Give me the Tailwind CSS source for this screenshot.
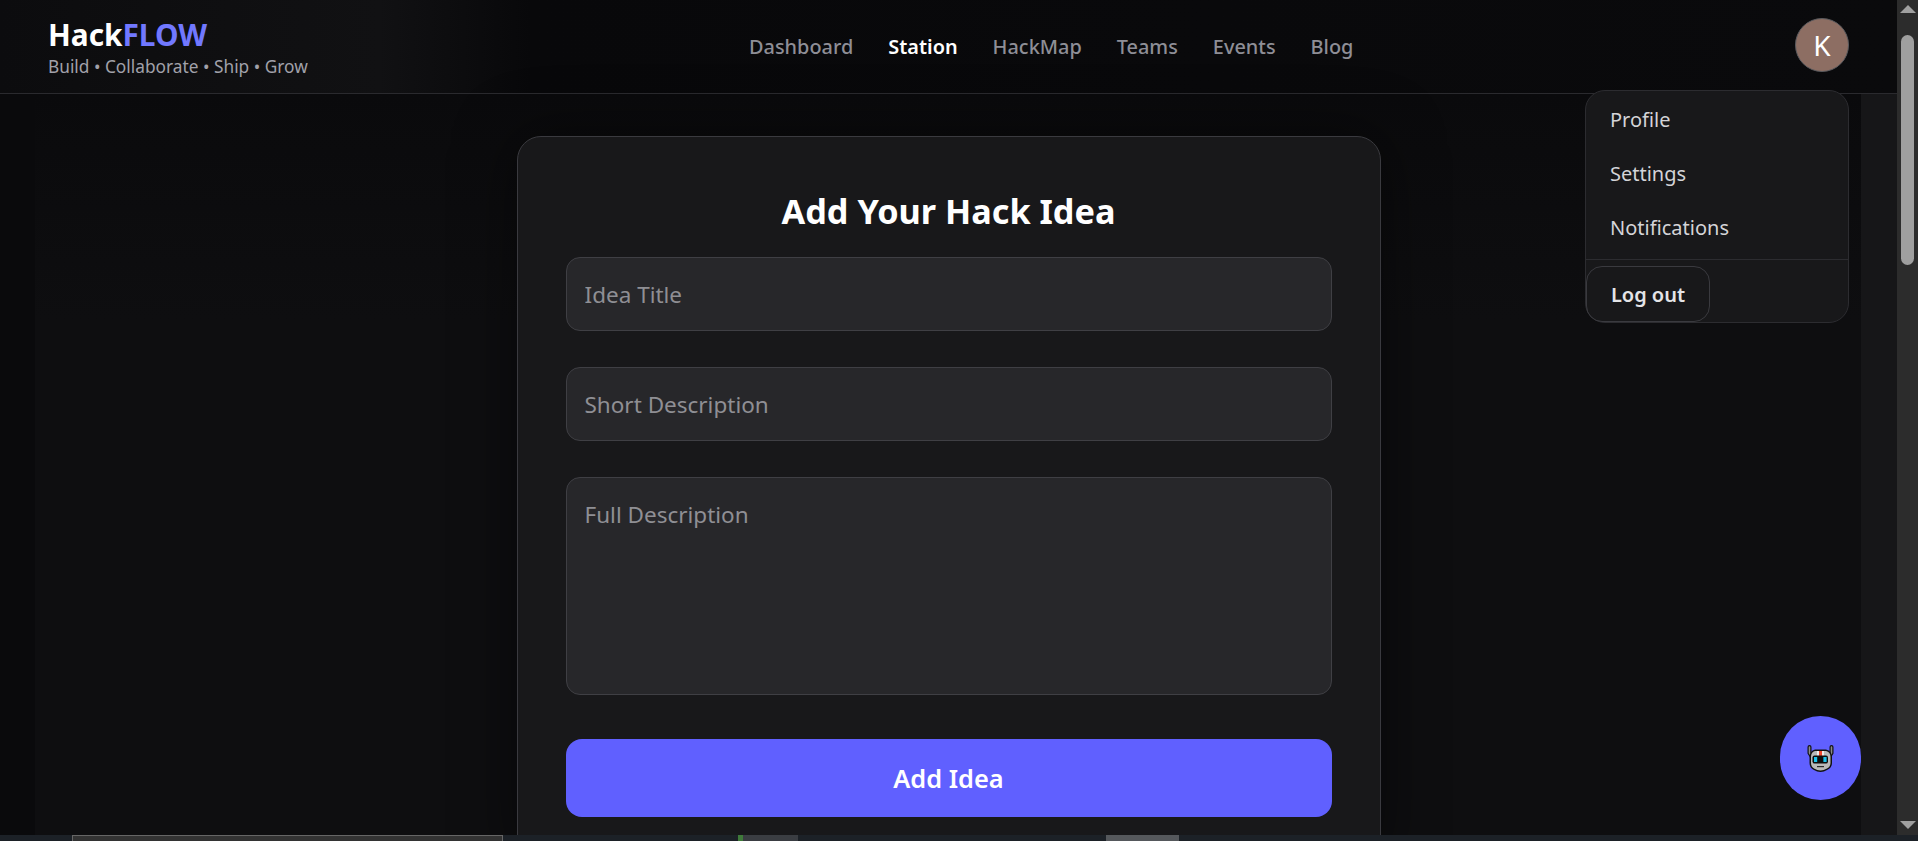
<!DOCTYPE html>
<html lang="en">
<head>
<meta charset="utf-8">
<title>HackFLOW</title>
<script src="https://cdn.jsdelivr.net/npm/@tailwindcss/browser@4"></script>
</head>
<body class="bg-[#0a0a0c] font-['Noto_Sans',sans-serif] text-white">
<div class="flex flex-col h-[841px] w-[1918px] overflow-hidden">
  <div class="flex h-[835px]">
    <div class="relative w-[1897px] h-[835px] overflow-hidden bg-[#0e0e10]">
      <div class="flex h-full w-full">
        <div class="w-[35px] bg-[#0a0a0c]"></div>
        <div class="flex-1 bg-[linear-gradient(180deg,#0a0a0c_94px,#0e0e10_320px)]"></div>
        <div class="w-[36px] bg-[#161618]"></div>
      </div>
      <div class="absolute inset-0">
        <header class="h-[94px] bg-[linear-gradient(90deg,#0c0c0e,#111113_20%,#08080a_28%,#0a0a0c)] border-b border-[#2a2a2e] flex items-center pl-[48px] pr-[48px]">
          <div class="w-[701px] shrink-0 pt-[3px]">
            <div class="text-[29.8px] leading-[34px] font-bold">Hack<span class="text-[#7178ff]">FLOW</span></div>
            <div class="text-[17.3px] leading-[22px] text-[#a1a1aa] mt-[4px]">Build • Collaborate • Ship • Grow</div>
          </div>
          <nav class="flex gap-[35px] text-[19.9px] leading-[28px] font-medium text-[#8e8e96] mt-[1px]">
            <a>Dashboard</a>
            <a class="text-white font-semibold">Station</a>
            <a>HackMap</a>
            <a>Teams</a>
            <a>Events</a>
            <a>Blog</a>
          </nav>
          <div class="flex-1 flex justify-end mb-[4px]">
            <div class="w-[54px] h-[54px] rounded-full bg-[#8d6e63] border border-[#5a5a5e] flex items-center justify-center text-[28px]">K</div>
          </div>
        </header>
        <main class="flex justify-center pt-[42px]">
          <form class="w-[864px] rounded-[24px] border border-[#3a3a3f] bg-[#18181a] px-[48px] pt-[48px] pb-[48px] shadow-[0_0_60px_rgba(0,0,0,0.5)]">
            <h1 class="text-[34.25px] leading-[52px] font-bold text-center mb-[20px]">Add Your Hack Idea</h1>
            <div class="flex flex-col gap-[36px]">
              <input placeholder="Idea Title" class="h-[74px] rounded-[14px] border border-[#3f3f44] bg-[#27272a] px-[18px] text-[22.5px] placeholder:text-[#8f8f94] outline-none">
              <input placeholder="Short Description" class="h-[74px] rounded-[14px] border border-[#3f3f44] bg-[#27272a] px-[18px] text-[22.5px] placeholder:text-[#8f8f94] outline-none">
              <textarea placeholder="Full Description" class="h-[218px] rounded-[14px] border border-[#3f3f44] bg-[#27272a] px-[18px] py-[20px] text-[22.5px] placeholder:text-[#8f8f94] outline-none resize-none"></textarea>
              <button type="button" class="h-[78px] rounded-[16px] bg-[#6060ff] text-[25.4px] font-semibold text-white mt-[8px]">Add Idea</button>
            </div>
          </form>
        </main>
      </div>
      <div class="absolute left-[1585px] top-[90px] w-[264px] h-[233px] rounded-[20px] border border-[#2c2c30] bg-[#18181a] text-[#d4d4d8] text-[20px]">
        <div class="flex flex-col pt-[2px]">
          <a class="h-[54px] flex items-center pl-[24px]">Profile</a>
          <a class="h-[54px] flex items-center pl-[24px]">Settings</a>
          <a class="h-[54px] flex items-center pl-[24px]">Notifications</a>
        </div>
        <div class="border-t border-[#2c2c30] mt-[4px] pt-[6px]">
          <button type="button" class="h-[56px] w-[124px] rounded-[16px] border border-[#3a3a3f] font-semibold text-[20px] text-[#e4e4e7] pt-[2px]">Log out</button>
        </div>
      </div>
      <button type="button" class="absolute left-[1780px] top-[716px] w-[81px] h-[84px] rounded-full bg-[#6060ff] flex items-center justify-center">
        <svg width="27" height="27" viewBox="0 0 27 27">
          <path d="M2.5 2V8L5 12M24.5 2V8L22 12" fill="none" stroke="#111" stroke-width="4" stroke-linecap="round"/>
          <path d="M2.5 2V8L5 12M24.5 2V8L22 12" fill="none" stroke="#8a8a8a" stroke-width="1.6" stroke-linecap="round"/>
          <path d="M8 4.5H19Q25 6 25 12V18Q25 23 20 25Q17 27 13.5 27Q10 27 7 25Q2.5 23 2.5 18V12Q2.5 6 8 4.5Z" fill="#111"/>
          <path d="M8 6H19Q23.5 7 23.5 12V18Q23.5 22 19.5 23.8Q17 25.5 13.5 25.5Q10 25.5 7.5 23.8Q4 22 4 18V12Q4 7 8 6Z" fill="#b9b9b9"/>
          <rect x="10" y="6" width="7" height="5" fill="#ececec"/>
          <rect x="12" y="6" width="3" height="5" fill="#f0452a"/>
          <rect x="5.5" y="10.5" width="15.5" height="8" rx="2" fill="#0d0d0d"/>
          <rect x="7" y="12" width="3.2" height="5" fill="#19c3ec"/>
          <rect x="16.4" y="12" width="3.2" height="5" fill="#19c3ec"/>
          <rect x="10" y="21" width="7" height="1.2" fill="#2a2a2a"/>
        </svg>
      </button>
    </div>
    <div class="w-[21px] bg-[#2c2c2c] flex flex-col items-center">
      <div class="mt-[5px] w-0 h-0 border-l-[8px] border-r-[8px] border-b-[8px] border-l-transparent border-r-transparent border-b-[#a0a0a0]"></div>
      <div class="mt-[22px] w-[13px] h-[230px] rounded-full bg-[#9f9f9f]"></div>
      <div class="mt-auto mb-[6px] w-0 h-0 border-l-[8px] border-r-[8px] border-t-[8px] border-l-transparent border-r-transparent border-t-[#a0a0a0]"></div>
    </div>
  </div>
  <div class="h-[6px] bg-[#1c2127] flex">
    <div class="ml-[72px] w-[431px] border border-b-0 border-[#666] bg-[#333]"></div>
    <div class="ml-[235px] w-[60px] bg-[#3a3d42] border-l-[5px] border-[#3f7a3a]"></div>
    <div class="ml-[308px] w-[73px] bg-[#55585c]"></div>
  </div>
</div>
</body>
</html>
